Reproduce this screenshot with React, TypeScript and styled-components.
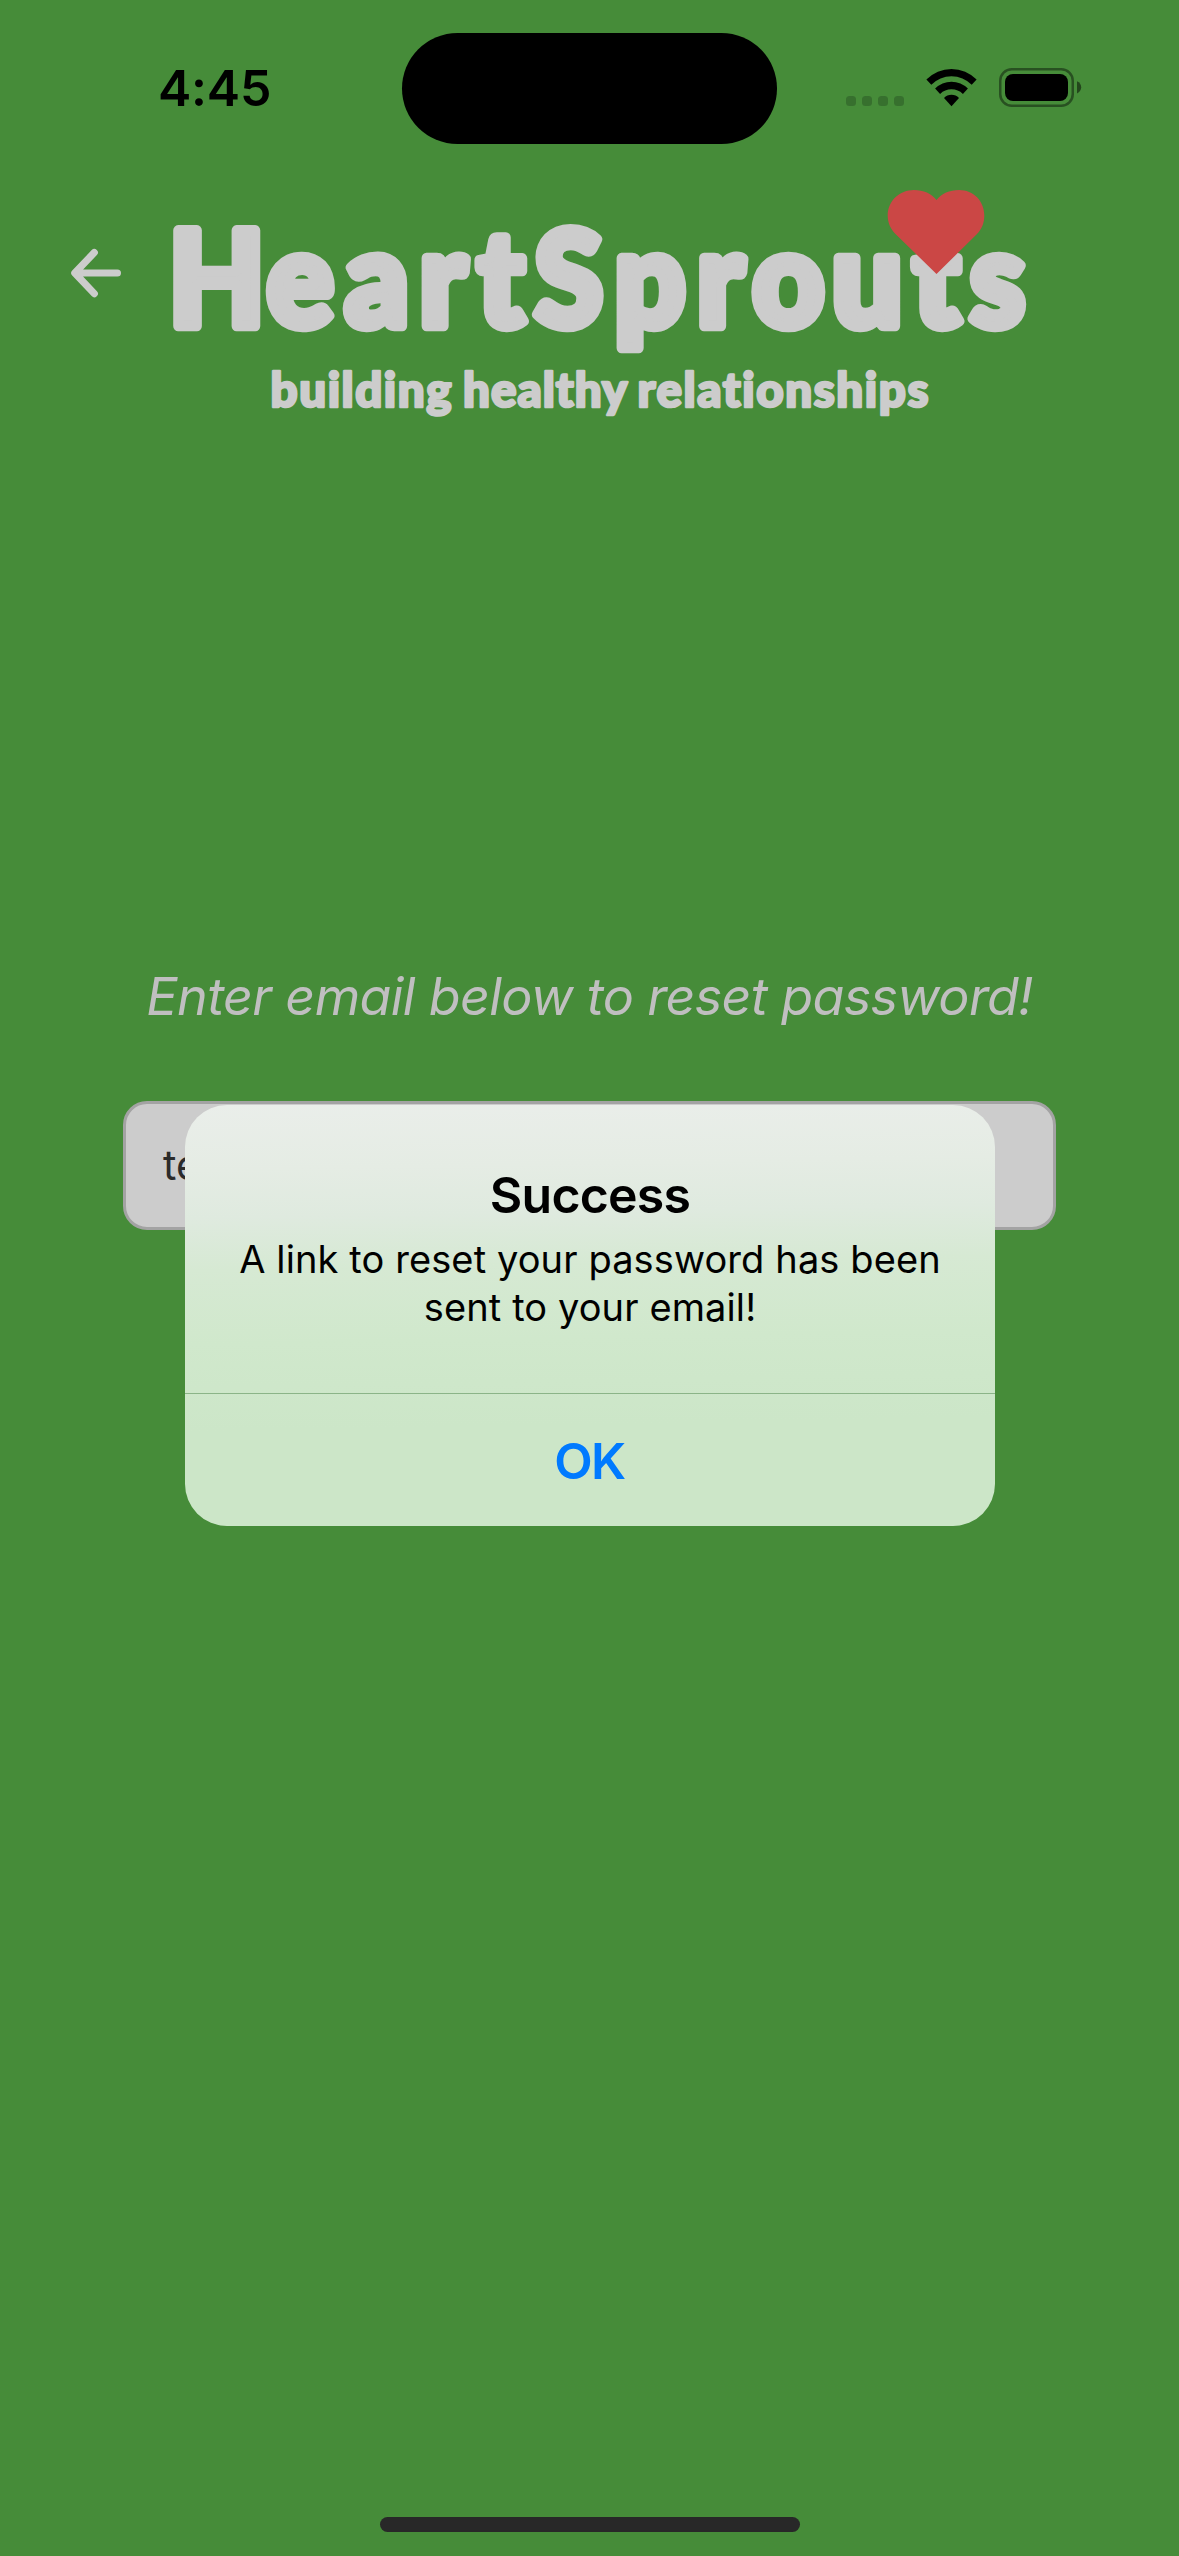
import React from 'react';
import styled, { createGlobalStyle } from 'styled-components';

const ink = '#cccccc';
const sans = 'Inter, "Liberation Sans", sans-serif';

const GlobalStyle = createGlobalStyle`
  html, body { margin: 0; padding: 0; background: #468c39; }
  * { box-sizing: border-box; }
`;

const Screen = styled.main`
  position: relative;
  display: flex;
  flex-direction: column;
  width: 1179px;
  height: 2556px;
  overflow: hidden;
  background: #468c39;
  font-family: ${sans};
`;

const StatusBar = styled.div`
  display: grid;
  grid-template-columns: 402px 375px 402px;
  align-items: center;
  height: 176px;
  flex: none;
`;

const Clock = styled.time`
  padding-left: 158px;
  font-size: 50px;
  line-height: 60px;
  font-weight: 600;
  letter-spacing: -0.2px;
  color: #000;
`;

const Island = styled.div`
  align-self: start;
  height: 111px;
  margin-top: 33px;
  border-radius: 56px;
  background: #000;
`;

const Indicators = styled.div`
  display: flex;
  gap: 22px;
  padding-left: 69px;
  height: 40px;

  svg { display: block; }
`;

const Header = styled.header`
  display: flex;
  align-items: flex-start;
  height: 264px;
  flex: none;
  padding: 4px 0 0 69px;
`;

const BackButton = styled.button`
  width: 54px;
  height: 54px;
  margin: 66px 37px 0 0;
  padding: 0;
  border: 0;
  background: none;

  svg { display: block; }
`;

const Wordmark = styled.svg`
  display: block;
  width: 880px;
  height: 260px;
  fill: ${ink};
  stroke: ${ink};
  stroke-linejoin: round;
  font-family: Lato, "Noto Sans", sans-serif;
  font-weight: 900;
  font-variant-ligatures: none;
`;

const Form = styled.form`
  display: flex;
  flex-direction: column;
  align-items: center;
  padding-top: 527px;
`;

const Prompt = styled.p`
  margin: 0 0 74px;
  font-size: 52px;
  line-height: 60px;
  font-style: italic;
  letter-spacing: -0.63px;
  white-space: nowrap;
  color: #c0bfc0;
`;

const EmailField = styled.div`
  display: flex;
  align-items: center;
  width: 933px;
  height: 129px;
  padding: 0 36px 2px 37px;
  border: 3px solid #a3a3a3;
  border-radius: 24px;
  background: ${ink};
  font-size: 41px;
  color: #2b2b2b;
`;

const Dialog = styled.section`
  position: absolute;
  top: 1105px;
  left: 185px;
  width: 810px;
  height: 421px;
  display: flex;
  flex-direction: column;
  overflow: hidden;
  border-radius: 42px;
  background: linear-gradient(
    179deg,
    #eaeeea 0%,
    #e5ece4 15%,
    #dfeadf 26%,
    #d6e9d3 38%,
    #d0e8cc 55%,
    #cce6c8 75%,
    #cce6c8 100%
  );
  color: #000;
  text-align: center;
`;

const DialogBody = styled.div`
  height: 289px;
  padding: 60px 40px 0;
  border-bottom: 1px solid #8bb488;
`;

const DialogTitle = styled.h1`
  margin: 0 0 10px;
  font-size: 50px;
  line-height: 60px;
  font-weight: 600;
  letter-spacing: -0.8px;
`;

const DialogText = styled.p`
  margin: 0;
  font-size: 38px;
  line-height: 48px;
  letter-spacing: 0.11px;
`;

const DialogAction = styled.button`
  flex: 1;
  padding: 1px 1px 0 0;
  border: 0;
  background: none;
  font: 600 50px/60px ${sans};
  letter-spacing: -1.6px;
  color: #007aff;
`;

const HomeIndicator = styled.div`
  width: 420px;
  height: 15px;
  margin: auto auto 24px;
  border-radius: 8px;
  background: #282828;
`;

function SignalDots() {
  return (
    <svg width="58" height="40" viewBox="0 0 58 40" fill="#37702e">
      {[0, 16, 32, 48].map((x) => (
        <rect key={x} x={x} y="28" width="10" height="10" rx="3.5" />
      ))}
    </svg>
  );
}

function Wifi() {
  return (
    <svg width="51" height="40" viewBox="0 0 51 40">
      <path d="M0.4 11.6A34.8 34.8 0 0 1 50.6 11.6L45.7 16.8A28.4 28.4 0 0 0 5.3 16.8Z" />
      <path d="M9.1 20.6A22.9 22.9 0 0 1 41.9 20.6L36.9 25.9A16.4 16.4 0 0 0 14.1 25.9Z" />
      <path d="M18 30A10.4 10.4 0 0 1 33 30L25.5 38.2Z" />
    </svg>
  );
}

function Battery() {
  return (
    <svg width="83" height="40" viewBox="0 0 83 40">
      <rect x="1.25" y="1.25" width="72.5" height="36.5" rx="11.5" fill="none" stroke="#000" strokeOpacity="0.42" strokeWidth="2.5" />
      <rect x="6" y="6" width="63" height="27" rx="8" />
      <path d="M78 13.2C83.6 15.4 83.6 23.2 78 25.4Z" fillOpacity="0.5" />
    </svg>
  );
}

function ArrowLeft() {
  return (
    <svg width="54" height="54" viewBox="69 246 54 54" fill="none" stroke={ink} strokeWidth="7.2" strokeLinecap="round" strokeLinejoin="round">
      <path d="M117.4 273H75M94.3 252.6L74.8 273L94.3 293.6" />
    </svg>
  );
}

/* Left edge of every letter, before the logo is narrowed to 94%. */
const letterStarts = [168.7, 267.1, 345, 419.5, 477.6, 534.6, 614.5, 697, 752.5, 832, 912.9, 970.1]
  .map((x) => (x / 0.94).toFixed(1))
  .join(' ');

function Logo() {
  return (
    <Wordmark viewBox="160 180 880 260" role="img">
      <text transform="scale(0.94 1)" x={letterStarts} y="326.5" fontSize="132" strokeWidth="10.5">
        HeartSprouts
      </text>
      <text y="406.7" fontSize="47.5" strokeWidth="2.6">
        <tspan x="270.5" textLength="181">building</tspan>{' '}
        <tspan x="463" textLength="163">healthy</tspan>{' '}
        <tspan x="637.5" textLength="291">relationships</tspan>
      </text>
      <path
        fill="#cb4745"
        stroke="none"
        d="M936.5 274L896 234.5C890.5 229 887.7 223 887.7 215.5C887.7 201 899.5 190 914 190C923.5 190 931.5 193.5 936.5 200C941.5 193.5 949.5 190 959 190C973.5 190 984.3 201 984.3 215.5C984.3 223 982 229 976.5 234.5Z"
      />
    </Wordmark>
  );
}

export default function App() {
  return (
    <Screen>
      <GlobalStyle />
      <StatusBar>
        <Clock>4:45</Clock>
        <Island />
        <Indicators>
          <SignalDots />
          <Wifi />
          <Battery />
        </Indicators>
      </StatusBar>

      <Header>
        <BackButton type="button">
          <ArrowLeft />
        </BackButton>
        <Logo />
      </Header>

      <Form>
        <Prompt>Enter email below to reset password!</Prompt>
        <EmailField>te</EmailField>
      </Form>

      <HomeIndicator />

      <Dialog role="alertdialog">
        <DialogBody>
          <DialogTitle>Success</DialogTitle>
          <DialogText>
            A link to reset your password has been
            <br />
            sent to your email!
          </DialogText>
        </DialogBody>
        <DialogAction type="button">OK</DialogAction>
      </Dialog>
    </Screen>
  );
}
